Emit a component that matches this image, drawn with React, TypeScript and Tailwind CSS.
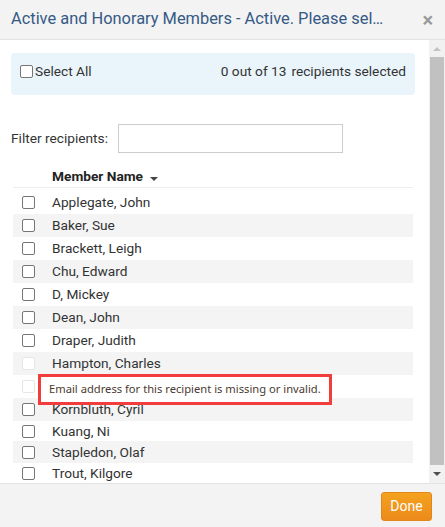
import { useState } from "react";

interface Member {
  name: string;
  disabled?: boolean;
  h?: string;
}

const members: Member[] = [
  { name: "Applegate, John" },
  { name: "Baker, Sue" },
  { name: "Brackett, Leigh" },
  { name: "Chu, Edward" },
  { name: "D, Mickey" },
  { name: "Dean, John" },
  { name: "Draper, Judith" },
  { name: "Hampton, Charles", disabled: true },
  { name: "", disabled: true },
  { name: "Kornbluth, Cyril" },
  { name: "Kuang, Ni", h: "h-[20px]" },
  { name: "Stapledon, Olaf", h: "h-[22px]" },
  { name: "Trout, Kilgore", h: "h-[21px]" },
];

function Box({ faint }: { faint?: boolean }) {
  return (
    <span
      className={`block w-[13px] h-[13px] rounded-[2px] border bg-white ${
        faint ? "border-[#e6e6e6]" : "border-[#767676]"
      }`}
    />
  );
}

export default function App() {
  const [filter, setFilter] = useState("");

  return (
    <div className="w-[445px] h-[527px] flex flex-col bg-white font-['Roboto',sans-serif] text-[13.7px] text-[#333] overflow-hidden">
      {/* Header */}
      <div className="h-[40px] shrink-0 flex items-center justify-between pl-[11px] pr-[12px] bg-[#f3f3f3] border-b border-[#e2e2e2]">
        <h1 className="text-[16.4px] text-[#355a85] leading-none">
          Active and Honorary Members - Active. Please sel…
        </h1>
        <span className="text-[#9a9a9a] text-[20px] font-bold leading-none">×</span>
      </div>

      {/* Body */}
      <div className="flex-1 flex min-h-0">
        <div className="flex-1 relative overflow-hidden pl-[11px] pr-[14px] pt-[13px]">
          <div className="h-[42px] rounded-[4px] bg-[#e9f5fb] flex justify-between pt-[9px] pl-[9px] pr-[9px]">
            <label className="flex items-start gap-[2px] leading-[18px]">
              <span className="mt-[3px]">
                <Box />
              </span>
              Select All
            </label>
            <span className="leading-[18px]">
              0 out of 13<span className="ml-[5px]">recipients selected</span>
            </span>
          </div>

          <div className="mt-[29px] flex items-center gap-[11px]">
            <span className="w-[96px] whitespace-nowrap">Filter recipients:</span>
            <input
              value={filter}
              onChange={(e) => setFilter(e.target.value)}
              className="w-[225px] h-[29px] border border-[#cccccc] outline-none px-2"
            />
          </div>

          {/* Table */}
          <div className="mt-[14px] ml-[2px] w-[400px]">
            <div className="h-[21px] border-b border-[#eeeeee] flex items-start pl-[39px] pt-[1px]">
              <span className="font-bold text-[#222] leading-[17px]">Member Name</span>
              <svg width="10" height="6" viewBox="0 0 10 6" className="ml-[6px] mt-[8px]">
                <path d="M1 1h8L5 5z" fill="#444" />
              </svg>
            </div>
            <div className="mt-[3px]">
              {members.map((m, i) => (
                <div
                  key={i}
                  className={`${m.h ?? "h-[23px]"} flex items-center ${
                    i % 2 === 1 ? "bg-[#f4f4f4]" : "bg-white"
                  }`}
                >
                  <span className="w-[39px] pl-[9px]">
                    <Box faint={m.disabled} />
                  </span>
                  <span>{m.name}</span>
                </div>
              ))}
            </div>
          </div>

          {/* Tooltip (annotated) */}
          <div className="absolute left-[38px] top-[334px] w-[294px] h-[31px] border-[3px] border-[#f23d3d] bg-white flex items-center pl-[8px]">
            <span className="font-['Noto_Sans',sans-serif] text-[11.2px] text-[#4a3a30]">
              Email address for this recipient is missing or invalid.
            </span>
          </div>
        </div>

        {/* Scrollbar */}
        <div className="w-[16px] shrink-0 bg-[#f1f1f1] flex flex-col items-center">
          <div className="h-[17px] flex items-center justify-center">
            <svg width="8" height="5" viewBox="0 0 8 5">
              <path d="M0 5h8L4 1z" fill="#c3c3c3" />
            </svg>
          </div>
          <div className="w-[14px] h-[408px] bg-[#c1c1c1]" />
          <div className="flex-1 flex items-center justify-center">
            <svg width="8" height="5" viewBox="0 0 8 5">
              <path d="M0 0h8L4 4z" fill="#505050" />
            </svg>
          </div>
        </div>
      </div>

      {/* Footer */}
      <div className="h-[44px] shrink-0 bg-[#f3f3f3] border-t border-[#e2e2e2] flex items-center justify-end pr-[13px]">
        <button className="w-[51px] h-[29px] rounded-[3px] border border-[#e2861a] bg-gradient-to-b from-[#f4a21f] to-[#ec8a1b] text-white text-[14px] mt-[2px]">
          Done
        </button>
      </div>
    </div>
  );
}
